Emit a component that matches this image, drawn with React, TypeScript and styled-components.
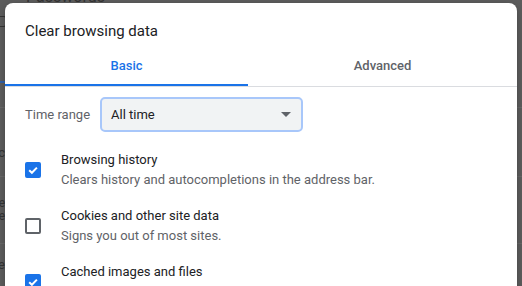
import { createGlobalStyle, styled } from 'styled-components';

const GlobalStyle = createGlobalStyle`
  html, body {
    margin: 0;
    padding: 0;
    width: 522px;
    height: 286px;
    overflow: hidden;
    background: #5c5c5c;
    font-family: Roboto, 'Liberation Sans', Arial, sans-serif;
  }
`;

const options = [
  { label: 'Browsing history', desc: 'Clears history and autocompletions in the address bar.', checked: true },
  { label: 'Cookies and other site data', desc: 'Signs you out of most sites.', checked: false },
  { label: 'Cached images and files', desc: 'Frees up less than 319 MB.', checked: true },
];

const Check = () => (
  <svg width="12" height="12" viewBox="0 0 12 12">
    <path d="M2.2 6.2 L4.9 8.8 L9.9 3.6" fill="none" stroke="#fff" strokeWidth="2" />
  </svg>
);

const App = () => {
  return (
    <>
      <GlobalStyle />
      {/* settings page dimmed behind the dialog */}
      <Page>
        <PageTitle>Passwords</PageTitle>
        <PageIcon />
        <PageTab />
        <PageSection $pad={37} $height={69}>
          <PageText>Sync</PageText>
        </PageSection>
        <PageSection $pad={20} $height={67}>
          <PageText $small>Save</PageText>
          <PageText $small>Offe</PageText>
        </PageSection>
        <PageSection $pad={13} $height={40}>
          <PageText>Use</PageText>
        </PageSection>
      </Page>
      <Dialog>
        <Title>Clear browsing data</Title>
        <Tabs>
          <Tab $active $width={243}>Basic</Tab>
          <Tab $width={269}>Advanced</Tab>
        </Tabs>
        <Body>
          <RangeRow>
            <RangeLabel>Time range</RangeLabel>
            <Select>
              <span>All time</span>
              <Arrow />
            </Select>
          </RangeRow>
          <OptionList>
            {options.map((o) => (
              <Option key={o.label}>
                <Box $checked={o.checked}>{o.checked && <Check />}</Box>
                <OptionText>
                  <OptionLabel>{o.label}</OptionLabel>
                  <OptionDesc>{o.desc}</OptionDesc>
                </OptionText>
              </Option>
            ))}
          </OptionList>
        </Body>
      </Dialog>
    </>
  );
};

export default App;

const Page = styled.div`
  display: flex;
  flex-direction: column;
  width: 522px;
  height: 286px;
  overflow: hidden;
  color: #333;
  font-size: 13px;
`;

const PageTitle = styled.div`
  font-size: 16px;
  line-height: 16px;
  height: 5px;
  margin: -11px 0 0 26px;
`;

const PageIcon = styled.div`
  width: 9px;
  height: 9px;
  margin: 22px 0 0 -5px;
  border: 1.5px solid #333;
  border-radius: 2px;
`;

const PageTab = styled.div`
  width: 6px;
  height: 2px;
  margin: 54px 0 24px;
  background: #2f5fa8;
`;

const PageSection = styled.div<{ $pad: number; $height: number }>`
  display: flex;
  flex-direction: column;
  flex-shrink: 0;
  box-sizing: border-box;
  width: 522px;
  height: ${(p) => p.$height}px;
  padding-top: ${(p) => p.$pad}px;
  border-top: 1px solid #666;
`;

const PageText = styled.div<{ $small?: boolean }>`
  display: flex;
  justify-content: flex-end;
  width: 5px;
  white-space: nowrap;
  font-size: ${(p) => (p.$small ? 12 : 13)}px;
  line-height: ${(p) => (p.$small ? 13 : 16)}px;
`;

const Dialog = styled.div`
  position: absolute;
  left: 5px;
  top: 3px;
  width: 512px;
  height: 320px;
  background: #fff;
  border-radius: 8px;
  box-shadow: 0 2px 6px rgba(0, 0, 0, 0.25);
`;

const Title = styled.div`
  padding: 17px 20px 0;
  height: 22px;
  font-size: 15px;
  line-height: 22px;
  color: #202124;
`;

const Tabs = styled.div`
  display: flex;
  margin-top: 4px;
  border-bottom: 1px solid #dadce0;
`;

const Tab = styled.div<{ $active?: boolean; $width: number }>`
  width: ${(p) => p.$width}px;
  height: 40px;
  display: flex;
  align-items: center;
  justify-content: center;
  box-sizing: border-box;
  font-size: 13px;
  font-weight: 500;
  color: ${(p) => (p.$active ? '#1a73e8' : '#5f6368')};
  border-bottom: 2px solid ${(p) => (p.$active ? '#1a73e8' : 'transparent')};
`;

const Body = styled.div`
  padding: 10px 20px 0;
`;

const RangeRow = styled.div`
  display: flex;
  align-items: center;
`;

const RangeLabel = styled.div`
  width: 75px;
  font-size: 13px;
  color: #5f6368;
`;

const Select = styled.div`
  width: 203px;
  height: 35px;
  box-sizing: border-box;
  display: flex;
  align-items: center;
  justify-content: space-between;
  padding: 0 10px 0 9px;
  border: 2px solid #a8c7fa;
  border-radius: 5px;
  background: #f1f3f4;
  font-size: 13px;
  color: #202124;
`;

const Arrow = styled.span`
  width: 0;
  height: 0;
  border-left: 5px solid transparent;
  border-right: 5px solid transparent;
  border-top: 5px solid #5f6368;
`;

const OptionList = styled.div`
  display: flex;
  flex-direction: column;
  margin-top: 10px;
`;

const Option = styled.div`
  display: flex;
  align-items: center;
  padding: 8px 0;
`;

const Box = styled.div<{ $checked: boolean }>`
  width: 16px;
  height: 16px;
  box-sizing: border-box;
  border-radius: 2px;
  margin-right: 20px;
  display: flex;
  align-items: center;
  justify-content: center;
  background: ${(p) => (p.$checked ? '#1a73e8' : '#fff')};
  border: 2px solid ${(p) => (p.$checked ? '#1a73e8' : '#5f6368')};
`;

const OptionText = styled.div`
  display: flex;
  flex-direction: column;
`;

const OptionLabel = styled.div`
  font-size: 13px;
  line-height: 20px;
  color: #202124;
`;

const OptionDesc = styled.div`
  font-size: 13px;
  line-height: 20px;
  color: #5f6368;
`;
